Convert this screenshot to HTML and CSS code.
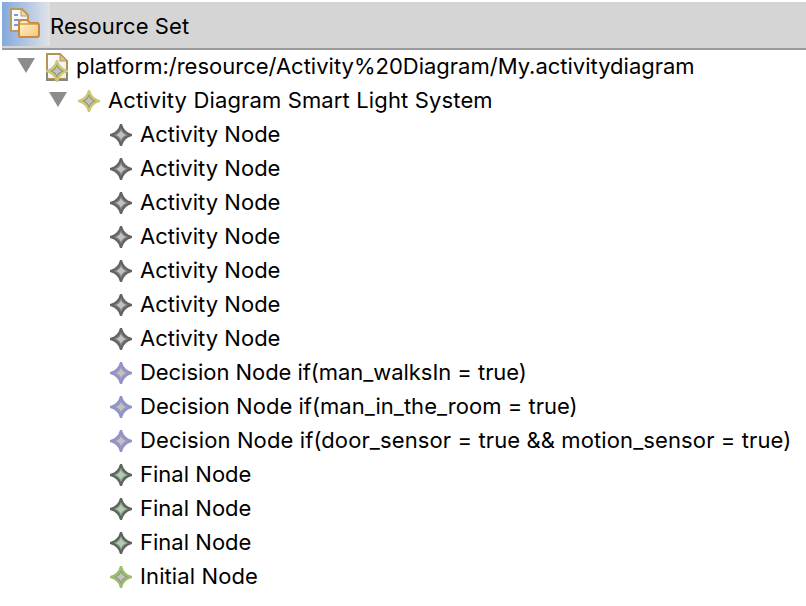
FILE: index.html
```
<!DOCTYPE html>
<html lang="en">
<head>
<meta charset="utf-8">
<title>Resource Set</title>
<link rel="stylesheet" href="styles.css">
</head>
<body>
<svg class="defs" aria-hidden="true">
  <defs>
    <linearGradient id="folder" x1="0" y1="0" x2="1" y2="1"><stop offset="0" stop-color="#fff3cf"/><stop offset="1" stop-color="#f5c877"/></linearGradient>
    <linearGradient id="page" x1="0" y1="0" x2="1" y2="1"><stop offset="0" stop-color="#ffffff"/><stop offset="1" stop-color="#e6ecf7"/></linearGradient>
    <symbol id="star" viewBox="0 0 24 24">
      <path class="rim" d="M11 1h2l1.500 4 2 2.500L19 9.500l4 1.500v2l-4 1.500-2.500 2-2 2.500L13 23h-2l-1.500-4-2-2.500L5 14.500 1 13v-2l4-1.500 2.500-2 2-2.500z"/>
      <path class="band" d="M12 5l1.500 3 2.500 2.500 3 1.500-3 1.500-2.500 2.500-1.500 3-1.500-3L8 13.500 5 12l3-1.500L10.500 8z"/>
      <path class="core" d="M12 7.500l1.500 2.500 3 2-3 2-1.500 2.500-1.500-2.500-3-2 3-2z"/>
    </symbol>
  </defs>
</svg>
<header class="header">
  <div class="header-icon">
    <svg width="48" height="44" viewBox="0 0 48 44">
      <path d="M9 7h11l6 6v16H9z" fill="url(#page)" stroke="#b99b5d" stroke-width="2"/>
      <path d="M19 7v7h7z" fill="#ead8a6" stroke="#b99b5d"/>
      <path d="M12 13h4M12 18h6M12 23h4" stroke="#8797c4" stroke-width="2"/>
      <path d="M17 34V20l2-2h6l3 3h8l1 2v11l-2 1H18z" fill="url(#folder)" stroke="#c98a40" stroke-width="2" stroke-linejoin="round"/>
      <path d="M18 22h18" stroke="#d39a4e" stroke-width="1.500"/>
    </svg>
  </div>
  <h1 class="title">Resource Set</h1>
</header>
<main class="tree">
  <div class="row root"><i class="arrow"></i>
    <svg class="file" width="24" height="30" viewBox="0 0 24 30">
      <path d="M2 2h13l7 7v18H2z" fill="url(#page)" stroke="#b49455" stroke-width="2"/>
      <path d="M15 2v7h7z" fill="#dfc18b" stroke="#b49455"/>
      <path d="M2 17v11h20V17" fill="none" stroke="#888780" stroke-width="2"/>
      <use class="olive" href="#star" x="0" y="7" width="24" height="24"/>
    </svg><span class="label path">platform:/resource/Activity%20Diagram/My.activitydiagram</span></div>
  <div class="row model"><i class="arrow"></i><svg class="node olive"><use href="#star"/></svg><span class="label">Activity Diagram Smart Light System</span></div>
  <div class="row leaf"><svg class="node gray"><use href="#star"/></svg><span class="label">Activity Node</span></div>
  <div class="row leaf"><svg class="node gray"><use href="#star"/></svg><span class="label">Activity Node</span></div>
  <div class="row leaf"><svg class="node gray"><use href="#star"/></svg><span class="label">Activity Node</span></div>
  <div class="row leaf"><svg class="node gray"><use href="#star"/></svg><span class="label">Activity Node</span></div>
  <div class="row leaf"><svg class="node gray"><use href="#star"/></svg><span class="label">Activity Node</span></div>
  <div class="row leaf"><svg class="node gray"><use href="#star"/></svg><span class="label">Activity Node</span></div>
  <div class="row leaf"><svg class="node gray"><use href="#star"/></svg><span class="label">Activity Node</span></div>
  <div class="row leaf"><svg class="node blue"><use href="#star"/></svg><span class="label walks">Decision Node if(man_walksIn = true)</span></div>
  <div class="row leaf"><svg class="node blue"><use href="#star"/></svg><span class="label">Decision Node if(man_in_the_room = true)</span></div>
  <div class="row leaf"><svg class="node blue"><use href="#star"/></svg><span class="label sensors">Decision Node if(door_sensor = true &amp;&amp; motion_sensor = true)</span></div>
  <div class="row leaf"><svg class="node green"><use href="#star"/></svg><span class="label">Final Node</span></div>
  <div class="row leaf"><svg class="node green"><use href="#star"/></svg><span class="label">Final Node</span></div>
  <div class="row leaf"><svg class="node green"><use href="#star"/></svg><span class="label">Final Node</span></div>
  <div class="row leaf"><svg class="node lime"><use href="#star"/></svg><span class="label initial">Initial Node</span></div>
</main>
</body>
</html>
```
FILE: styles.css
```
* { box-sizing: border-box; }
body {
  margin: 0;
  padding-top: 2px;
  height: 606px;
  overflow: hidden;
  background: #fff;
  color: #000;
  font: 400 22px/34px Inter, "Liberation Sans", sans-serif;
}
.defs { display: block; width: 0; height: 0; }
.header {
  display: flex;
  height: 48px;
  margin-left: 2px;
  background: #d5d5d5;
  border-bottom: 2px solid #9b9b9b;
}
.header-icon {
  width: 48px;
  height: 44px;
  background: linear-gradient(90deg, #83a9dc, #e0e3e8);
}
.header-icon svg { display: block; }
.title {
  margin: 0;
  font-size: 22px;
  font-weight: 400;
  line-height: 48px;
  letter-spacing: 0.1px;
  white-space: nowrap;
}
.row { display: flex; align-items: center; height: 34px; }
.root { padding-left: 17px; }
.model { padding-left: 49px; }
.leaf { padding-left: 109px; }
.arrow {
  width: 18px;
  height: 15px;
  margin: 0 10px 3px 0;
  background: #8c8c8c;
  clip-path: polygon(0 0, 100% 0, 50% 100%);
}
.file { flex: none; margin-right: 7px; }
.node { flex: none; width: 24px; height: 24px; margin: 0 7px 0 0; }
.label { white-space: pre; letter-spacing: 0.02px; margin-bottom: 2px; }
.path { letter-spacing: 0; }
.model .label { letter-spacing: 0.14px; }
.walks { letter-spacing: -0.05px; }
.sensors, .initial { letter-spacing: 0.11px; }
.rim { fill: var(--rim); }
.band { fill: var(--band); }
.core { fill: #c2c2c2; }
.olive { --rim: #cdc973; --band: #96967a; }
.gray { --rim: #646464; --band: #8c8c8c; }
.blue { --rim: #9292ca; --band: #a0a0b4; }
.green { --rim: #606460; --band: #83b97e; }
.lime { --rim: #9bbf6c; --band: #8f9b86; }
```
